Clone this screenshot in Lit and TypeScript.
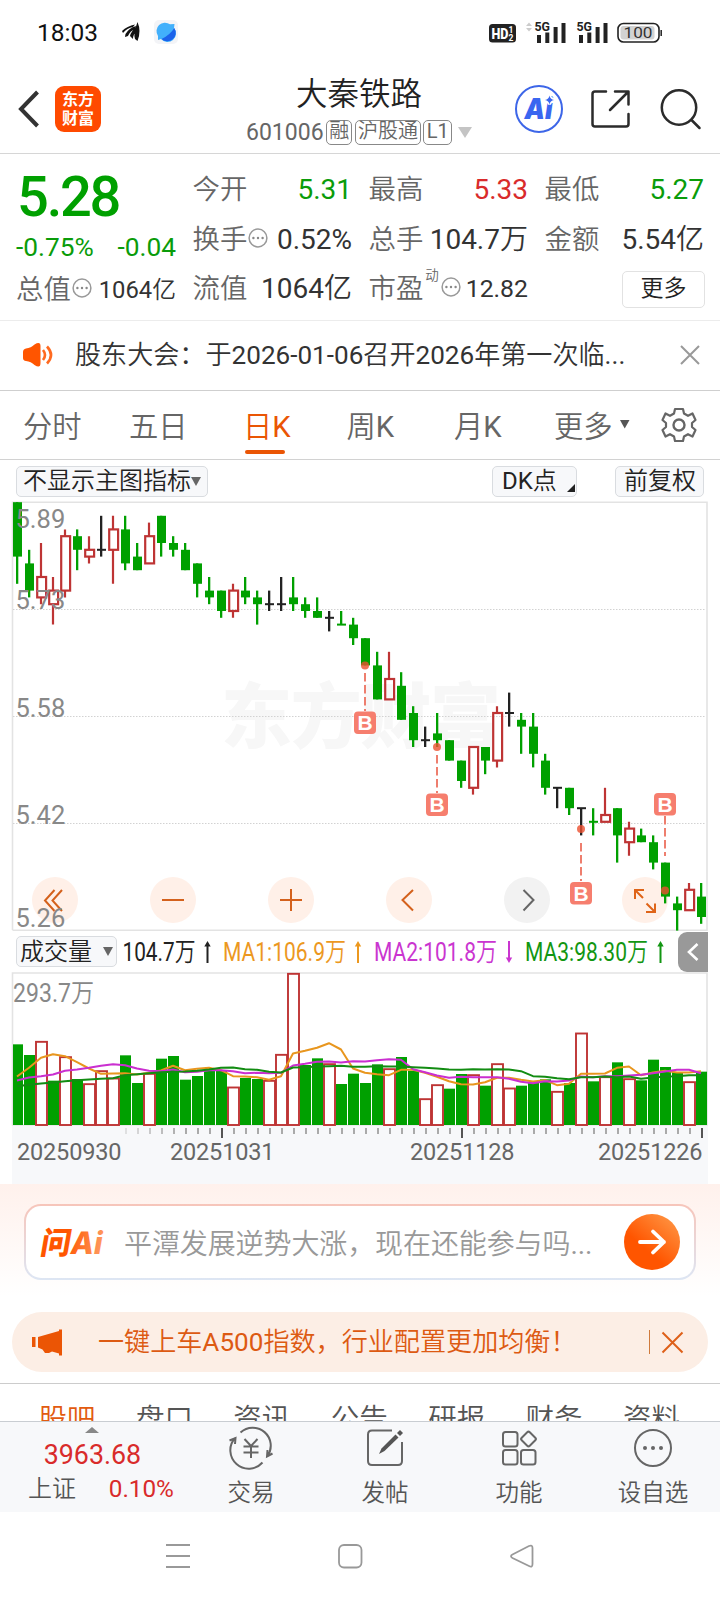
import { LitElement, html, svg, css } from "lit";
import { customElement } from "lit/decorators.js";

const GREEN = "#00a000";
const RED = "#be3434";
const BLACK = "#222";

// kind, high, body top, body bottom, low — in price ticks below 5.89
const CANDLES: [string, number, number, number, number][] = [
  ["g", 0, 0, 8, 12], ["g", 7, 9, 13, 14], ["r", 6, 11, 14, 15], ["r", 11, 13, 15, 18], ["r", 4, 5, 13, 14],
  ["g", 4, 5, 7, 10], ["r", 5, 7, 8, 9], ["k", 2, 7, 7, 8], ["r", 2, 4, 7, 12], ["g", 2, 4, 9, 10],
  ["g", 6, 8, 10, 10], ["r", 3, 5, 9, 9], ["g", 2, 2, 6, 8], ["g", 5, 6, 7, 8], ["g", 6, 7, 10, 10],
  ["g", 9, 9, 12, 14], ["g", 11, 13, 14, 15], ["g", 13, 13, 16, 17], ["r", 12, 13, 16, 17], ["g", 11, 13, 14, 15],
  ["g", 13, 14, 15, 18], ["k", 13, 15, 15, 16], ["k", 11, 15, 15, 16], ["g", 11, 14, 15, 16], ["g", 14, 15, 16, 17],
  ["g", 14, 16, 17, 17], ["k", 16, 17, 17, 19], ["g", 16, 18, 18, 18], ["g", 17, 18, 20, 21], ["g", 20, 20, 24, 24],
  ["g", 22, 24, 29, 29], ["r", 22, 26, 29, 29], ["g", 25, 27, 32, 32], ["g", 30, 31, 35, 36], ["k", 33, 35, 35, 36],
  ["g", 31, 34, 35, 36], ["g", 35, 35, 38, 38], ["g", 38, 38, 41, 42], ["r", 36, 36, 42, 43], ["g", 36, 36, 38, 40],
  ["r", 30, 31, 38, 39], ["k", 28, 31, 31, 33], ["g", 31, 32, 33, 37], ["g", 31, 33, 37, 39], ["g", 37, 38, 42, 43],
  ["k", 42, 42, 42, 45], ["g", 42, 42, 45, 46], ["k", 45, 45, 45, 49], ["g", 45, 47, 47, 49], ["r", 42, 46, 47, 47],
  ["g", 45, 45, 49, 53], ["r", 47, 48, 50, 52], ["g", 48, 49, 50, 50], ["g", 49, 50, 53, 54], ["g", 53, 53, 58, 59],
  ["g", 58, 59, 60, 63], ["r", 56, 57, 60, 60], ["g", 56, 58, 61, 62],
];

// bar heights in thirds of a pixel; sign < 0 marks a rising day
const VOLUMES = [
  242, 210, -251, 133, -205, 138, -124, -163, -141, 209, 126, -155, 199, 207, 136, 147, 163, 163, -114, 141,
  138, -134, -212, -455, 180, 200, -184, 123, 154, 126, 182, -169, 204, 163, -79, -121, 109, 153, -151, 118,
  -184, -111, 118, 127, 137, -101, 126, -276, 131, -145, 188, -139, 134, 196, 174, 159, -130, 160,
];
// moving averages, height above the base line in thirds of a pixel
const MA1 = [147, 173, 203, 214, 208, 190, 171, 155, 156, 157, 153, 158, 165, 179, 166, 170, 173, 166, 148, 147, 145, 137, 148, 216, 224, 233, 247, 228, 171, 158, 154, 151, 167, 167, 158, 146, 133, 124, 123, 130, 143, 143, 137, 132, 136, 121, 125, 155, 155, 156, 173, 177, 151, 159, 164, 159, 159, 163];
const MA2 = [135, 144, 148, 153, 164, 168, 173, 179, 184, 181, 171, 164, 163, 168, 160, 161, 166, 166, 163, 157, 158, 157, 158, 180, 185, 191, 192, 189, 193, 192, 196, 199, 197, 169, 160, 150, 143, 146, 145, 145, 145, 140, 131, 127, 133, 132, 135, 147, 145, 148, 148, 150, 152, 157, 162, 167, 167, 157];
const MA3 = [118, 122, 126, 129, 133, 136, 138, 140, 142, 151, 154, 157, 160, 161, 162, 164, 168, 173, 174, 169, 167, 161, 159, 174, 175, 177, 178, 179, 176, 176, 178, 177, 177, 175, 173, 171, 168, 167, 169, 168, 169, 168, 163, 148, 146, 142, 139, 145, 145, 147, 145, 147, 140, 144, 147, 148, 151, 151];

const line = (v: number[]) => v.map((h, i) => `${17 + 12 * i},${(153.5 - h / 3).toFixed(1)}`).join(" ");

const dots = html`<svg class="dots" width="20" height="20" viewBox="0 0 20 20"><circle cx="10" cy="10" r="8.9" fill="none" stroke="#999" stroke-width="1.5"/><g fill="#888"><circle cx="5.4" cy="10" r="1.2"/><circle cx="10" cy="10" r="1.2"/><circle cx="14.6" cy="10" r="1.2"/></g></svg>`;

@customElement("app-root")
export class AppRoot extends LitElement {
  static styles = css`
    :host { display: flex; flex-direction: column; width: 720px; height: 1600px; overflow: hidden; background: #fff; color: #333; font-weight: 400; font-family: Roboto, "Noto Sans CJK SC DemiLight", "Noto Sans CJK SC Light", "Noto Sans CJK SC", sans-serif; }
    * { box-sizing: border-box; }
    svg { display: block; flex: none; overflow: visible; }
    span, div { white-space: nowrap; }
    .status { height: 65px; flex: none; display: flex; align-items: center; padding: 0 0 1px 37px; }
    .clock { font-size: 24.5px; width: 85px; color: #111; font-weight: 400; }
    .header { height: 89px; flex: none; display: flex; align-items: center; border-bottom: 1px solid #d6d6d6; padding: 0 0 0 17px; }
    .logo { width: 46px; height: 46px; flex: none; border-radius: 9px; background: #ff4a00; color: #fff; font-family: "Noto Sans CJK SC", sans-serif; font-size: 16px; line-height: 19px; font-weight: 700; text-align: center; padding-top: 3px; margin-left: 15px; }
    .title { width: 226px; flex: none; margin-left: 145px; display: flex; flex-direction: column; height: 88px; padding-top: 9px; }
    .name { font-size: 31.5px; line-height: 42px; color: #222; text-align: center; }
    .codes { display: flex; align-items: center; gap: 2.4px; height: 27px; margin-top: 2.5px; color: #666; font-size: 23px; }
    .tag { border: 1.5px solid #888; border-radius: 5px; height: 25px; line-height: 21px; font-size: 20px; padding: 0 2.2px; }
    .caret { margin-left: 4px; }
    .quotes { height: 167px; flex: none; display: flex; gap: 16.5px; border-bottom: 1px solid #ececec; padding: 11px 0 0 16px; font-size: 27.4px; line-height: 50px; }
    .col { width: 159.5px; flex: none; display: flex; flex-direction: column; }
    .first { width: 160px; }
    .row { height: 49.7px; display: flex; align-items: center; color: #333; }
    .row .k { color: #666; }
    .row .v { margin-left: auto; font-size: 28px; }
    .row .s { font-size: 24.8px; }
    .first .s { font-size: 23.8px; }
    .price { height: 64px; line-height: 64px; font-size: 56px; font-weight: 500; letter-spacing: -2.2px; color: #00a000; padding-left: 1px; }
    .delta { height: 36px; line-height: 37px; display: flex; justify-content: space-between; font-size: 26.3px; color: #0a9c0a; }
    .up { color: #d92b2b !important; }
    .down { color: #0a9c0a !important; }
    .sup { font-size: 13.5px; line-height: 14px; align-self: flex-start; margin: 4px 1px 0 2px; color: #666; }
    .dots { margin-top: -4px; margin-left: 1px; }
    .more { margin-left: auto; width: 83px; height: 37px; line-height: 33px; font-size: 23px; border: 1.5px solid #e2e2e2; border-radius: 5px; text-align: center; margin-right: -1px; color: #222; }
    .news { height: 70px; flex: none; display: flex; align-items: center; border-bottom: 1px solid #cfcfcf; padding: 0 20px 2px 22px; font-size: 26.1px; }
    .news .t { margin-left: 22px; flex: 1; margin-top: -3px; }
    .periods { height: 69px; flex: none; display: flex; border-bottom: 1px solid #d2d2d2; padding-left: 23px; font-size: 29.3px; line-height: 73px; color: #666; }
    .periods .p { height: 68px; }
    .on { color: #ea5504; display: flex; flex-direction: column; }
    .bar { width: 40px; height: 4px; flex: none; border-radius: 2px; background: #ea5504; margin-top: -14px; margin-left: 2px; }
    .tools { height: 42px; flex: none; display: flex; padding: 5.5px 15px 0 16px; font-size: 24px; color: #222; }
    .btn { height: 31px; line-height: 28px; border: 1px solid #d9dce0; border-radius: 5px; background: #f7f8fa; display: flex; align-items: center; padding: 0 5px 0 6px; }
    .main, .legend, .vol, .axis { flex: none; }
    .legend { height: 41px; display: flex; align-items: center; padding: 0 12px 0 16px; }
    .legend .btn { width: 101px; font-size: 24px; color: #222; padding: 0 5px 0 3px; gap: 11px; }
    .fold { width: 30px; height: 40px; border-radius: 9px 0 0 9px; background: #999; display: flex; align-items: center; justify-content: center; margin-top: 1px; }
    .axis { margin: 0 12px; background: #f7f8fa; }
    .ask { height: 128px; flex: none; padding: 20px 24px 0; background: linear-gradient(#fff1ec 0, #fff 112px); }
    .field { height: 76px; border: 2px solid transparent; border-radius: 17px; background: linear-gradient(#fff, #fff) padding-box, linear-gradient(#f7c5ba, #dde6f4) border-box; display: flex; align-items: center; padding: 0 14px; color: #999; font-size: 28px; }
    .field .t { margin-left: 18px; flex: 1; margin-top: -1px; letter-spacing: -0.1px; }
    .promo { height: 60px; flex: none; margin: 0 12px; border-radius: 30px; background: #fceee5; display: flex; align-items: center; padding: 0 25px 0 20px; color: #dd5a12; font-size: 26.1px; }
    .promo .t { margin-left: 35px; flex: 1; margin-top: -4px; }
    .rule { width: 1px; height: 24px; background: #cf7a3c; margin-right: 12px; }
    .sections { height: 38px; flex: none; margin-top: 11px; border-top: 1px solid #ccc; overflow: hidden; display: flex; gap: 40.4px; padding: 15px 0 0 38.5px; font-size: 28.5px; line-height: 42px; color: #555; }
    .sections .hot { color: #e25b10; }
    .dock { height: 91px; flex: none; border-top: 1px solid #c9cdd2; background: #f7f8fa; display: flex; color: #555; font-size: 23.5px; }
    .index { width: 184px; display: flex; flex-direction: column; padding: 5px 10px 0 28px; }
    .index .n { font-size: 26.8px; line-height: 30px; color: #d92b2b; text-align: center; margin: 7px 0 0 -17px; }
    .pair { display: flex; justify-content: space-between; line-height: 34px; font-size: 24px; margin-top: 2px; }
    .pair .up { font-size: 24.3px; }
    .act { width: 134.1px; display: flex; flex-direction: column; align-items: center; padding-top: 6px; }
    .act span { line-height: 30px; margin-top: 10px; }
    .sys { flex: 1; }
  `;

  private candle([kind, hi, top, bot, lo]: [string, number, number, number, number], i: number) {
    const x = 12 * i;
    const y = (n: number) => 0.2 + n * 6.8;
    const color = kind === "g" ? GREEN : kind === "r" ? RED : BLACK;
    if (kind === "r") {
      return svg`<g fill="none" stroke=${color} stroke-width="2.2"><path d="M${x + 17} ${y(hi)}V${y(top)}M${x + 17} ${y(bot)}V${y(lo)}"/><rect x=${x + 13.2} y=${y(top)} width="8.9" height=${y(bot) - y(top)}/></g>`;
    }
    const h = Math.max(y(bot) - y(top), 2);
    return svg`<g fill=${color}><rect x=${x + 16} y=${y(hi)} width="2.3" height=${y(lo) - y(hi)}/><rect x=${x + 13} y=${bot === top ? y(top) - 1 : y(top)} width="9" height=${h}/></g>`;
  }

  private marker(x: number, dot: number, box: number, y1: number, y2: number) {
    return svg`<g><path d="M${x} ${y1}V${y2}" stroke="#ee7e6e" stroke-width="2" stroke-dasharray="8.5 3.5"/><circle cx=${x} cy=${dot} r="4" fill="#ec5030" opacity=".8"/><rect x=${x - 11} y=${box} width="22" height="22.5" rx="4" fill="#f67e6e"/><text x=${x} y=${box + 18.6} font-size="21" font-weight="700" text-anchor="middle" fill="#fff" font-family="Liberation Sans, sans-serif">B</text></g>`;
  }

  private mainChart() {
    return html`<svg class="main" width="720" height="429" viewBox="0 0 720 429">
      <g font-family='"Noto Sans CJK SC", sans-serif' font-weight="900" font-size="71"><text x="221" y="240" textLength="280" fill="#f7f7f7">东方财富</text></g>
      <path d="M12.500 428V0.300H707V428.200H12.500" fill="none" stroke="#e3e3e3" stroke-width="1.6"/>
      <path d="M13 107.500H706M13 214.500H706M13 321.500H706" stroke="#d2d2d2" stroke-width="1" stroke-dasharray="1.5 1.5"/>
      <g fill="#fff0e8">${[55, 173, 291, 409, 645].map((x) => svg`<circle cx=${x} cy="398" r="23"/>`)}<circle cx="527" cy="398" r="23" fill="#f2f2f2"/></g>
      <g fill="none" stroke="#d4611c" stroke-width="2">
        <path d="M54.500 388L45 398.500L54.500 409M62 388L52.500 398.500L62 409M162 398H184M280 398H302M291 387V409M413 388L402.500 398L413 408.500"/>
        <path d="M523.500 388L533.500 398L523.500 408.500" stroke="#666"/>
        <path d="M644 388H635V397M635 388L643 396M655 401.500V410H646M655 410L646.500 401.500" stroke="#df6418"/>
      </g>
      ${CANDLES.map((c, i) => this.candle(c, i))}
      ${this.marker(365, 163.5, 209.5, 171, 209)}
      ${this.marker(437, 245, 291.5, 253, 291)}
      ${this.marker(581, 327, 380, 341, 379)}
      ${this.marker(665, 388.5, 291, 314, 354)}
      <g font-family="Roboto, sans-serif" font-size="25.500" fill="#888">${[["5.89", 25.5], ["5.73", 107], ["5.58", 215], ["5.42", 322], ["5.26", 425]].map(([t, y]) => svg`<text x="15.500" y=${y}>${t}</text>`)}</g>
    </svg>`;
  }

  private legendText(x: number, w: number, t: string, color: string, arrow: number, up: boolean) {
    return svg`<g fill=${color}><text x=${x} y="30" textLength=${w} lengthAdjust="spacingAndGlyphs">${t}</text><path d=${up ? `M${arrow} 10L${arrow + 3.2} 15.500H${arrow + 1}V32H${arrow - 1}V15.500H${arrow - 3.2}Z` : `M${arrow} 32L${arrow + 3.2} 26.500H${arrow + 1}V10H${arrow - 1}V26.500H${arrow - 3.2}Z`}/></g>`;
  }

  private volumes() {
    return html`<svg class="vol" width="720" height="154" viewBox="0 0 720 154">
      <path d="M12.500 153V1H707V153Z" fill="none" stroke="#e3e3e3" stroke-width="1.6"/>
      <text x="13" y="30" font-size="25" fill="#888" textLength="81" lengthAdjust="spacingAndGlyphs">293.7万</text>
      ${VOLUMES.map((v, i) => {
        const h = Math.abs(v) / 3;
        return v > 0
          ? svg`<rect x=${i ? 12 * i + 12 : 13} y=${153 - h} width=${i ? 11 : 10} height=${h} fill=${GREEN}/>`
          : svg`<rect x=${12 * i + 12} y=${153.5 - h} width="11" height=${h - 0.5} fill="#fff" stroke=${RED} stroke-width="1.900"/>`;
      })}
      <g fill="none" stroke-width="2" stroke-linejoin="round"><polyline points=${line(MA1)} stroke="#e8961e"/><polyline points=${line(MA2)} stroke="#ca2fd0"/><polyline points=${line(MA3)} stroke="#128c12"/></g>
    </svg>`;
  }

  private axis() {
    const minor = Array.from({ length: 49 }, (_, i) => 114 + 12 * i).filter((x) => x !== 210 && x !== 450 && x !== 690);
    return html`<svg class="axis" width="696" height="58" viewBox="0 0 696 58">
      ${minor.map((x) => svg`<rect x=${x - 1} y="2" width="2" height="6" fill="#aaa" opacity=${Math.min(1, (x - 90) / 80)}/>`)}
      ${[210, 450, 690].map((x) => svg`<rect x=${x - 1} y="2" width="2" height="10" fill="#555"/>`)}
      <g font-family="Roboto, sans-serif" font-size="23.500" fill="#666"><text x="5" y="34" textLength="104.500">20250930</text><text x="158" y="34" textLength="104.500">20251031</text><text x="398" y="34" textLength="104.500">20251128</text><text x="586" y="34" textLength="104.500">20251226</text></g>
    </svg>`;
  }

  render() {
    return html`
      <div class="status">
        <span class="clock">18:03</span>
        <svg width="20" height="20" viewBox="0 0 20 20" fill="#111"><path d="M0 9Q5 4 13 2.500L11 5Q5 6 1 11Z M3.500 12Q7 6 14 4L13 7Q8 9 6 14L3 15Z M8 14Q9 9 15.500 4L15 9Q11 12 11 17Z M13 17Q11 12 15.500 0Q19.500 9 15.500 19Z"/></svg>
        <svg width="24" height="24" viewBox="0 0 24 24" style="margin-left:12px"><rect width="24" height="24" rx="5" fill="#f3f4f7"/><path d="M4 20L4 16A8.500 8.500 0 0 1 16 4.300L20.500 4L20 8A8.500 8.500 0 0 1 7 19Z" fill="#42b0fb"/><path d="M20.300 8Q16 15 7.500 19A8.500 8.500 0 0 0 20.300 8Z" fill="#1c62ea"/></svg>
        <svg width="176" height="26" viewBox="0 0 176 26" style="margin-left:310px" font-family="Roboto, sans-serif">
          <rect x="1" y="5" width="27" height="18.500" rx="3.500" fill="#222"/><text x="3.500" y="19.500" font-size="14" font-weight="900" fill="#fff" textLength="17" lengthAdjust="spacingAndGlyphs">HD</text><text x="20.500" y="13.500" font-size="8.500" font-weight="700" fill="#fff">1</text><text x="20.500" y="21.500" font-size="8.500" font-weight="700" fill="#fff">2</text>
          <path d="M38 7L41 3.500L44 7ZM38 9L41 12.500L44 9Z" fill="#ccc"/>
          ${[0, 42].map((x) => svg`<text x=${46.5 + x} y="12" font-size="12.500" font-weight="700" fill="#222" textLength="15.500" lengthAdjust="spacingAndGlyphs">5G</text><path d="M${49 + x} 16h4v8h-4zM${57.3 + x} 13.500h4v10.500h-4zM${65.6 + x} 8h4v16h-4zM${73.5 + x} 4h4v20h-4z" fill="#222"/>`)}
          <rect x="130" y="4.500" width="41" height="18.500" rx="5.500" fill="#fff" stroke="#222" stroke-width="1.600"/><rect x="132.500" y="7" width="34" height="13.500" rx="3" fill="#d2d2d2"/><path d="M173.200 11V17" stroke="#222" stroke-width="1.500"/><text x="135.500" y="19" font-size="14.500" fill="#333" textLength="29" lengthAdjust="spacingAndGlyphs">100</text>
        </svg>
      </div>
      <div class="header">
        <svg width="23" height="38" viewBox="0 0 23 38"><path d="M20.500 2L4 19L20.500 36" fill="none" stroke="#333" stroke-width="4"/></svg>
        <div class="logo">东方<br>财富</div>
        <div class="title">
          <div class="name">大秦铁路</div>
          <div class="codes"><span>601006</span><span class="tag">融</span><span class="tag">沪股通</span><span class="tag">L1</span><svg class="caret" width="14" height="11" viewBox="0 0 14 11"><path d="M0 0H14L7 11Z" fill="#c4c4c4"/></svg></div>
        </div>
        <svg width="212" height="50" viewBox="0 0 212 50" style="margin-left:26px">
          <circle cx="41" cy="25" r="23" fill="#fff" stroke="#3d66e8" stroke-width="2"/><text x="26.500" y="34.500" font-family="Inter, sans-serif" font-size="28" font-weight="900" font-style="italic" fill="#3a66f0" textLength="28" lengthAdjust="spacingAndGlyphs">Ai</text><path d="M51.500 11.500Q52.200 15.300 56 16Q52.200 16.700 51.500 20.500Q50.800 16.700 47 16Q50.800 15.300 51.500 11.500Z" fill="#3a66f0" stroke="#fff" stroke-width="3" paint-order="stroke"/>
          <g fill="none" stroke="#2b2b2b" stroke-width="2.500" stroke-linecap="round" stroke-linejoin="round"><path d="M108 7.500H97Q94.500 7.500 94.500 10V40Q94.500 42.500 97 42.500H128Q130.500 42.500 130.500 40V30M117 7.500H130.500V20.500M130 8L112 26"/><circle cx="181" cy="23.500" r="17.200"/><path d="M193.500 36L201.500 44"/></g>
        </svg>
      </div>
      <div class="quotes">
        <div class="col first">
          <div class="price">5.28</div>
          <div class="delta"><span>-0.75%</span><span>-0.04</span></div>
          <div class="row"><span class="k">总值</span>${dots}<span class="v s">1064亿</span></div>
        </div>
        <div class="col">
          <div class="row"><span class="k">今开</span><span class="v down">5.31</span></div>
          <div class="row"><span class="k">换手</span>${dots}<span class="v">0.52%</span></div>
          <div class="row"><span class="k">流值</span><span class="v">1064亿</span></div>
        </div>
        <div class="col">
          <div class="row"><span class="k">最高</span><span class="v up">5.33</span></div>
          <div class="row"><span class="k">总手</span><span class="v">104.7万</span></div>
          <div class="row"><span class="k">市盈</span><span class="sup">动</span>${dots}<span class="v s">12.82</span></div>
        </div>
        <div class="col">
          <div class="row"><span class="k">最低</span><span class="v down">5.27</span></div>
          <div class="row"><span class="k">金额</span><span class="v">5.54亿</span></div>
          <div class="row"><span class="more">更多</span></div>
        </div>
      </div>
      <div class="news">
        <svg width="31" height="26" viewBox="0 0 31 26"><path d="M1 10Q1 7 4 6.500Q9 6 12.500 2.500Q18.500 -1 18.500 4V21Q18.500 27 12.500 23Q9 19.500 4 19Q1 18.500 1 16Z" fill="#ff5500"/><path d="M21 8Q25 13 21 18M25 4.500Q33 13 25 21.500" fill="none" stroke="#ff6a20" stroke-width="2.600"/></svg>
        <span class="t">股东大会：于2026-01-06召开2026年第一次临...</span>
        <svg width="20" height="20" viewBox="0 0 20 20"><path d="M1 1L19 19M19 1L1 19" stroke="#999" stroke-width="2"/></svg>
      </div>
      <div class="periods">
        <span class="p" style="width:106px">分时</span><span class="p" style="width:114px">五日</span>
        <span class="p on" style="width:103.500px">日K<i class="bar"></i></span><span class="p" style="width:107.500px">周K</span><span class="p" style="width:100px">月K</span><span class="p" style="width:66px">更多</span>
        <svg width="10" height="68" viewBox="0 0 10 68"><path d="M0 29H9.500L4.700 37.500Z" fill="#555"/></svg>
        <svg width="36" height="68" viewBox="-18 -34 36 68" style="margin-left:31px"><path d="M-4 -16H4L5 -11.500L9 -9.200L13.500 -11.500L16.500 -5L13 -2V2L16.500 5L13.500 11.500L9 9.200L5 11.500L4 16H-4L-5 11.500L-9 9.200L-13.500 11.500L-16.500 5L-13 2V-2L-16.500 -5L-13.500 -11.500L-9 -9.200L-5 -11.500Z" fill="none" stroke="#666" stroke-width="2.200" stroke-linejoin="round"/><circle r="5.500" fill="none" stroke="#666" stroke-width="2.400"/></svg>
      </div>
      <div class="tools">
        <div class="btn" style="width:192px">不显示主图指标<svg width="10" height="9" viewBox="0 0 10 9"><path d="M0 0H10L5 9Z" fill="#666"/></svg></div>
        <div class="btn" style="width:85px;margin-left:284px;padding-left:9px">DK点<svg width="8" height="8" viewBox="0 0 8 8" style="margin:14px 0 0 10px"><path d="M8 0V8H0Z" fill="#222"/></svg></div>
        <div class="btn" style="width:89px;margin-left:38px;padding-left:8px">前复权</div>
      </div>
      ${this.mainChart()}
      <div class="legend">
        <div class="btn">成交量<svg width="10" height="9" viewBox="0 0 10 9"><path d="M0 0H10L5 9Z" fill="#666"/></svg></div>
        <svg width="561" height="41" viewBox="117 0 561 41" font-size="26">
          ${this.legendText(122.5, 73, "104.7万", "#222", 207.5, true)}
          ${this.legendText(223, 123, "MA1:106.9万", "#ec981f", 358, true)}
          ${this.legendText(374, 123, "MA2:101.8万", "#ca35d0", 509, false)}
          ${this.legendText(525, 123, "MA3:98.30万", "#129612", 660.5, true)}
        </svg>
        <div class="fold"><svg width="12" height="18" viewBox="0 0 12 18"><path d="M10.500 1L2 9L10.500 17" fill="none" stroke="#fff" stroke-width="2.600"/></svg></div>
      </div>
      ${this.volumes()}
      ${this.axis()}
      <div class="ask"><div class="field">
        <svg width="66" height="32" viewBox="0 0 66 32"><defs><linearGradient id="ai" x1="0" x2="1"><stop offset=".4" stop-color="#ff5500"/><stop offset="1" stop-color="#ff9a60"/></linearGradient></defs><text transform="skewX(-10)" x="4" y="27.500" font-family='Inter, "Noto Sans CJK SC", sans-serif' font-size="31" font-weight="800" fill="url(#ai)" textLength="62" lengthAdjust="spacingAndGlyphs">问Ai</text></svg>
        <span class="t">平潭发展逆势大涨，现在还能参与吗...</span>
        <svg width="56" height="56" viewBox="0 0 56 56"><defs><linearGradient id="go" x1=".3" y1=".8" x2=".9" y2=".1"><stop offset=".2" stop-color="#ff5500"/><stop offset="1" stop-color="#ff9240"/></linearGradient></defs><circle cx="28" cy="28" r="28" fill="url(#go)"/><path d="M16 28H40M29 17.500L40 28L29 38.500" fill="none" stroke="#fff" stroke-width="3.800" stroke-linecap="round" stroke-linejoin="round"/></svg>
      </div></div>
      <div class="promo">
        <svg width="31" height="27" viewBox="0 0 31 27" fill="#eb5505"><path d="M0 8H3.500V18H0ZM6 8L27 2V0.500H30V26.500H27V24.500L20 22.500L17 24H13L10.500 20.500L6 18.500Z"/></svg>
        <span class="t">一键上车A500指数，行业配置更加均衡！</span>
        <i class="rule"></i>
        <svg width="21" height="21" viewBox="0 0 21 21"><path d="M0.500 0.500L20.500 20.500M20.500 0.500L0.500 20.500" stroke="#de6019" stroke-width="2"/></svg>
      </div>
      <div class="sections"><span class="hot">股吧</span><span>盘口</span><span>资讯</span><span>公告</span><span>研报</span><span>财务</span><span>资料</span></div>
      <div class="dock">
        <div class="index">
          <svg width="14" height="6" viewBox="0 0 14 6" style="margin-left:57px"><path d="M0 6L7 0L14 6Z" fill="#888"/></svg>
          <span class="n">3963.68</span>
          <div class="pair"><span>上证</span><span class="up">0.10%</span></div>
        </div>
        <div class="act"><svg width="44" height="40" viewBox="0 0 44 40" fill="none" stroke="#666" stroke-width="2"><path d="M11.500 4.500A18 18 0 0 1 38.500 28M33.500 34.500A18 18 0 0 1 6 10M0.500 12.500L6.500 10L6 16M43.500 25.500L38 28.500L38.500 22"/><path d="M15.500 11L22 18L28.500 11M14.500 18.500H29.500M14.500 24.500H29.500M22 18V30"/></svg><span>交易</span></div>
        <div class="act"><svg width="38" height="40" viewBox="0 0 38 40" fill="none" stroke="#666" stroke-width="2"><path d="M26 2.500H6Q2 2.500 2 6.500V33Q2 37 6 37H32Q36 37 36 33V14"/><path d="M13 26L15.500 20.500L29.500 6.500L32.500 9.500L18.500 23Z" fill="#555" stroke="none"/><path d="M31 5L34 2L37 5L34 8Z" fill="#555" stroke="none"/></svg><span>发帖</span></div>
        <div class="act"><svg width="38" height="40" viewBox="0 0 38 40" fill="none" stroke="#666" stroke-width="2"><rect x="3" y="4" width="14.500" height="14.500" rx="2.500"/><rect x="3" y="22" width="14.500" height="14.500" rx="2.500"/><rect x="21" y="22" width="14.500" height="14.500" rx="2.500"/><rect x="-5.700" y="-5.700" width="11.400" height="11.400" rx="1.800" transform="translate(28.500 11) rotate(45)"/></svg><span>功能</span></div>
        <div class="act"><svg width="40" height="40" viewBox="0 0 40 40" fill="none" stroke="#666" stroke-width="2"><circle cx="20" cy="20" r="18"/><g fill="#666" stroke="none"><circle cx="12" cy="20" r="2"/><circle cx="20" cy="20" r="2"/><circle cx="28" cy="20" r="2"/></g></svg><span>设自选</span></div>
      </div>
      <svg class="sys" width="720" height="88" fill="none" stroke="#999" stroke-width="1.800"><path d="M166 33H190M166 44H190M166 55H190"/><rect x="339" y="33" width="22.500" height="22.500" rx="5"/><path d="M512.500 42.500L529 34Q532.500 32.500 532.500 36V52Q532.500 56 529 54L512.500 46Q509.500 44 512.500 42.500Z"/></svg>
    `;
  }
}
